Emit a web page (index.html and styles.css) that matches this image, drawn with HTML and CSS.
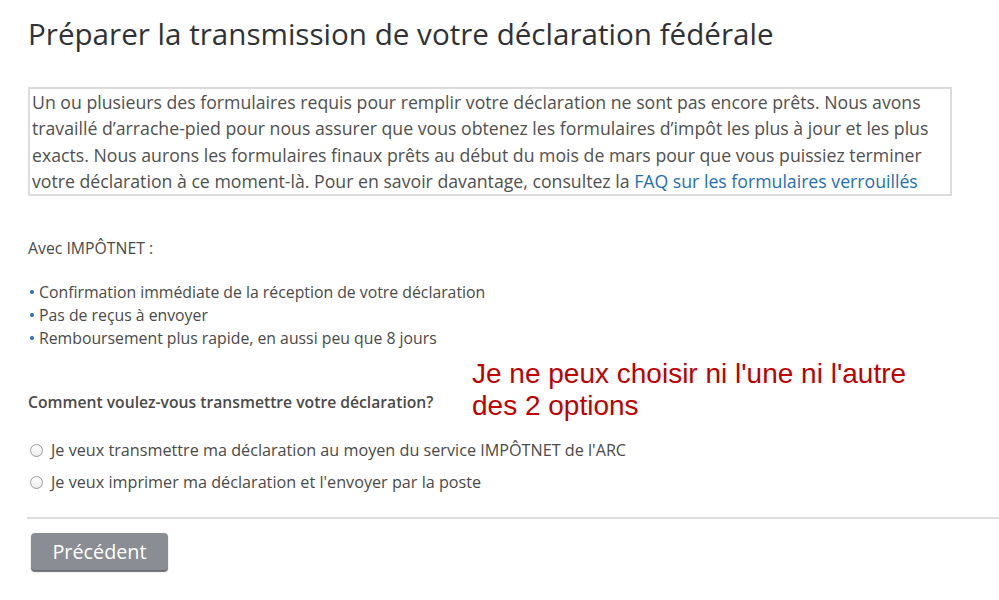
FILE: index.html
```html
<html>

<head>
  <title>Préparer la transmission</title>
  <link rel="stylesheet" href="styles.css">
</head>

<body>

  <main>
    <h1>Préparer la transmission de votre déclaration fédérale</h1>

    <div class="notice">
      Un ou plusieurs des formulaires requis pour remplir votre déclaration ne sont pas encore prêts. Nous avons
      travaillé d’arrache-pied pour nous assurer que vous obtenez les formulaires d’impôt les plus à jour et les plus
      exacts. Nous aurons les formulaires finaux prêts au début du mois de mars pour que vous puissiez terminer
      votre déclaration à ce moment-là. Pour en savoir davantage, consultez la <a href="#">FAQ sur les formulaires verrouillés</a>
    </div>

    <p class="intro">Avec IMPÔTNET :</p>

    <ul class="perks">
      <li>Confirmation immédiate de la réception de votre déclaration</li>
      <li>Pas de reçus à envoyer</li>
      <li>Remboursement plus rapide, en aussi peu que 8 jours</li>
    </ul>

    <p class="question">Comment voulez-vous transmettre votre déclaration?</p>

    <div class="options">
      <label><span class="radio"></span>Je veux transmettre ma déclaration au moyen du service IMPÔTNET de l'ARC</label>
      <label><span class="radio"></span>Je veux imprimer ma déclaration et l'envoyer par la poste</label>
    </div>

    <hr>

    <button class="back">Précédent</button>
  </main>

  <!-- note added over the capture -->
  <div class="note">Je ne peux choisir ni l'une ni l'autre<br>des 2 options</div>

</body>

</html>
```

FILE: styles.css
```css
body {
  margin: 0;
  font-family: "Open Sans", "Noto Sans", sans-serif;
  color: #4a4a4a;
  background: #fff;
}

main {
  padding: 14px 0 0 28px;
}

h1 {
  margin: 0;
  font-size: 29.6px;
  font-weight: 400;
  color: #2f3337;
  line-height: 40px;
}

.notice {
  margin-top: 33px;
  width: 914px;
  border: 2px solid #dcdcdc;
  padding: 0 4px 0 2px;
  font-size: 17.7px;
  line-height: 26.3px;
  color: #505050;
}

.notice a {
  color: #1f6fb5;
  text-decoration: none;
}

.intro {
  margin: 41px 0 0;
  font-size: 15.8px;
  line-height: 22px;
}

.perks {
  list-style: none;
  margin: 22px 0 0;
  padding: 0;
  font-size: 15.8px;
  line-height: 23px;
}

.perks li::before {
  content: "";
  display: inline-block;
  width: 4px;
  height: 4px;
  border-radius: 50%;
  background: #2a6db5;
  margin: 0 5px 3px 2px;
  vertical-align: middle;
}

.question {
  margin: 41px 0 0;
  font-size: 15.7px;
  font-weight: 600;
  line-height: 22px;
  color: #4a4a4a;
}

.options {
  margin-top: 26px;
  display: flex;
  flex-direction: column;
  gap: 10px;
}

.options label {
  display: flex;
  align-items: center;
  font-size: 16.2px;
  line-height: 22px;
}

.radio {
  width: 11px;
  height: 11px;
  border: 1px solid #9a9a9a;
  border-radius: 50%;
  background: linear-gradient(#fff, #ececec);
  margin: 0 8px 0 2px;
}

hr {
  margin: 24px 0 0 -1px;
  border: 0;
  height: 2px;
  background: #dedede;
}

.back {
  margin: 14px 0 0 3px;
  width: 137px;
  height: 37px;
  border: 0;
  border-radius: 4px;
  background: #8a8d93;
  box-shadow: 0 2px 1px #6b6d72;
  color: #fff;
  font-family: "Open Sans", "Noto Sans", sans-serif;
  font-size: 19.8px;
}

.note {
  position: absolute;
  left: 472px;
  top: 358px;
  font-family: "Liberation Sans", Arial, sans-serif;
  font-size: 28px;
  line-height: 32px;
  color: #c00000;
}
```
